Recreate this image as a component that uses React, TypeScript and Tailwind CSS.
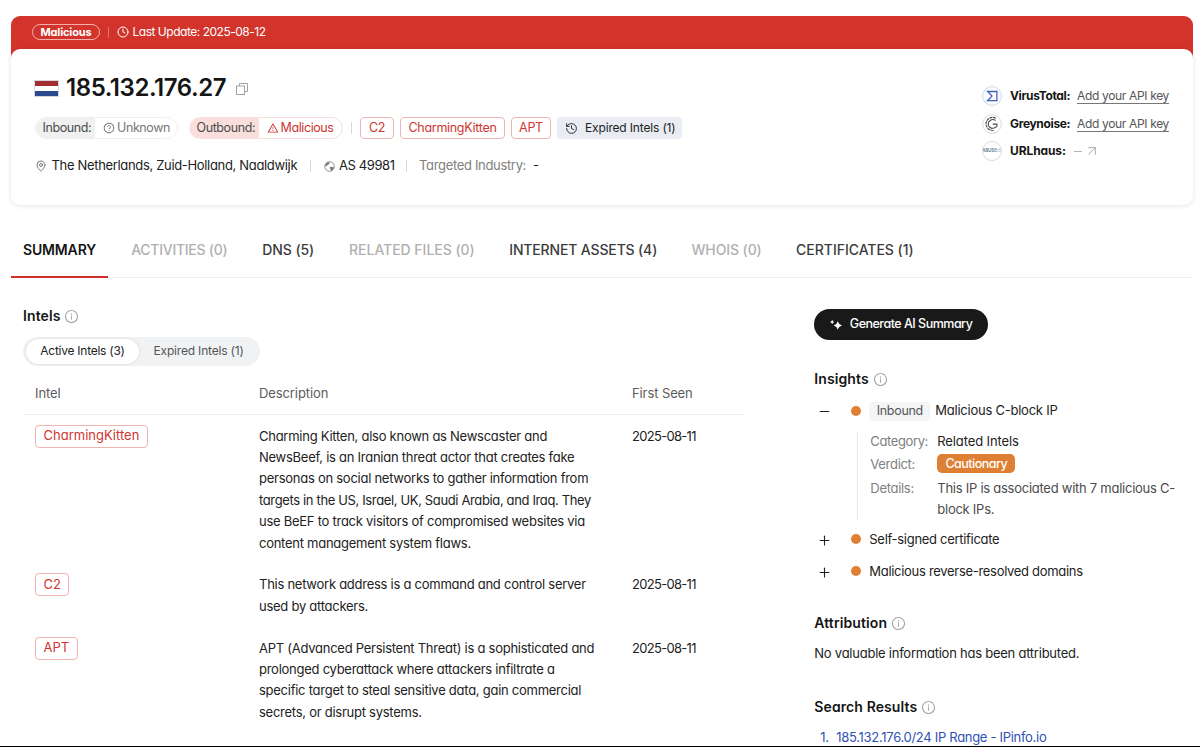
import type { ReactNode } from "react";
import { ArrowUpRight, Clock, History, MapPin, Minus, Plus } from "lucide-react";
import {
  AiOutlineInfoCircle,
  AiOutlineQuestionCircle,
  AiOutlineWarning,
} from "react-icons/ai";
import clsx from "clsx";

const tabs = [
  { label: "SUMMARY", active: true, className: "w-[73px] tracking-[-0.15px]" },
  { label: "ACTIVITIES (0)", disabled: true, className: "w-[96px] tracking-[-0.27px]" },
  { label: "DNS (5)", className: "w-[51.5px] tracking-[-0.1px]" },
  { label: "RELATED FILES (0)", disabled: true, className: "w-[125px] tracking-[-0.03px]" },
  { label: "INTERNET ASSETS (4)", className: "w-[147px] tracking-[-0.15px]" },
  { label: "WHOIS (0)", disabled: true, className: "w-[69.5px] tracking-[-0.1px]" },
  { label: "CERTIFICATES (1)", className: "w-[117px] tracking-[-0.03px]" },
];

const intels = [
  {
    name: "CharmingKitten",
    date: "2025-08-11",
    lines: [
      "Charming Kitten, also known as Newscaster and",
      "NewsBeef, is an Iranian threat actor that creates fake",
      "personas on social networks to gather information from",
      "targets in the US, Israel, UK, Saudi Arabia, and Iraq. They",
      "use BeEF to track visitors of compromised websites via",
      "content management system flaws.",
    ],
  },
  {
    name: "C2",
    date: "2025-08-11",
    lines: [
      "This network address is a command and control server",
      "used by attackers.",
    ],
  },
  {
    name: "APT",
    date: "2025-08-11",
    lines: [
      "APT (Advanced Persistent Threat) is a sophisticated and",
      "prolonged cyberattack where attackers infiltrate a",
      "specific target to steal sensitive data, gain commercial",
      "secrets, or disrupt systems.",
    ],
  },
];

function Tag({ children, className }: { children: ReactNode; className?: string }) {
  return (
    <span
      className={clsx(
        "inline-flex items-center rounded-[4px] border border-[#efb4b1] text-[#cf3430]",
        className
      )}
    >
      {children}
    </span>
  );
}

function Divider() {
  return <span className="block h-3 w-px bg-[#d9d9d9]" />;
}

function Heading({ children }: { children: ReactNode }) {
  return (
    <h2 className="flex h-5 items-center gap-1 pb-[2px] text-[14px] font-semibold tracking-[0.1px] text-[#151515]">
      {children}
      <AiOutlineInfoCircle className="mt-[2px] size-[15px] text-[#a5a5a5]" />
    </h2>
  );
}

function Dot() {
  return <span className="size-[10px] shrink-0 rounded-full bg-[#de7f33]" />;
}

function CopyIcon() {
  return (
    <svg viewBox="0 0 12 12" className="size-3" fill="none" stroke="#a3a3a3">
      <path d="M3.5 3V.5h8v8H9" />
      <rect x=".5" y="3" width="8" height="8.5" />
    </svg>
  );
}

function GlobeIcon() {
  return (
    <svg viewBox="0 0 12 12" className="size-[11px]">
      <circle cx="6" cy="6" r="5.2" fill="none" stroke="#777" strokeWidth=".9" />
      <path
        d="M2 3 4.6 1.2l1.6 1-.8 1.3-1.5.5-.6 1.4-1.9.3ZM6.8 6.4l2.5.1 1.7.8-2 2.9-1.3.6-.5-1.8-.9-1.2Z"
        fill="#777"
      />
    </svg>
  );
}

function SparkleIcon() {
  return (
    <svg viewBox="0 0 12 12" className="size-3" fill="#fff">
      <path d="M7.8 2.2Q8.6 5.4 12 6.4 8.6 7.4 7.8 10.8 7 7.4 3.7 6.4 7 5.4 7.8 2.2Z" />
      <path d="M2.2.8Q2.6 2.5 4.4 3 2.6 3.5 2.2 5.2 1.8 3.5 0 3 1.8 2.5 2.2.8Z" />
    </svg>
  );
}

function VirusTotalLogo() {
  return (
    <svg viewBox="0 0 20 20" className="size-5" fill="none">
      <circle cx="10" cy="10" r="9.4" fill="#fbfcff" stroke="#cfd7ee" />
      <path d="M5.6 5.5h9.3v9.2H5.6L10 10.1Z" stroke="#4660b8" strokeWidth="1.3" />
    </svg>
  );
}

function GreynoiseLogo() {
  return (
    <svg viewBox="0 0 20 20" className="size-5" fill="none">
      <circle cx="10" cy="10" r="9.4" fill="#fff" stroke="#d9d9d9" />
      <g stroke="#4a4a4a" strokeWidth="1.1">
        <path d="M13.8 4.2A6.6 6.6 0 0 0 4 9.6a6.8 6.8 0 0 0 7.4 6.8" strokeDasharray="3 .6" />
        <path d="M13.6 6.5A4.6 4.6 0 0 0 6.2 10a4.2 4.2 0 0 0 5.8 3.9l2.9-1.5v-2.3h-4.2" />
      </g>
    </svg>
  );
}

function UrlhausLogo() {
  return (
    <span className="flex size-5 items-center justify-center overflow-hidden rounded-full border border-[#d8dbdd] text-[4.5px] font-bold tracking-[-0.1px] text-[#6f8895]">
      ABUSE<span className="text-[#b9c6cd]">ch</span>
    </span>
  );
}

function ApiKeyLink() {
  return (
    <a className="w-[92px] border-b border-[#777] leading-[15px] tracking-[-0.34px] text-[#555]">
      Add your API key
    </a>
  );
}

function Header() {
  return (
    <header className="mr-[7px] ml-[11px]">
      <div className="flex h-[43px] items-start rounded-t-[9px] bg-[#d2332b] pt-2 pl-[21px] text-white">
        <span className="flex h-4 w-[68px] items-center justify-center rounded-full border border-[#f3b0ab] text-[11px] font-bold tracking-[-0.15px]">
          Malicious
        </span>
        <span className="mt-[3px] ml-2 h-[11px] w-px bg-[#e2766f]" />
        <Clock className="mt-[2px] ml-2 size-3" />
        <span className="ml-[3.5px] text-[12px] leading-4 tracking-[-0.48px]">
          Last Update: 2025-08-12
        </span>
      </div>

      <div className="relative -mt-[10px] flex h-[156px] justify-between rounded-[9px] bg-white pt-[23px] pr-6 pl-[23px] shadow-[0_1px_5px_rgba(0,0,0,0.11)]">
        <div>
          <div className="flex h-8 items-center">
            <span className="flex h-[17px] w-[25px] flex-col border border-[#d5d5dc]">
              <span className="flex-1 bg-[#a32e31]" />
              <span className="flex-1 bg-white" />
              <span className="flex-1 bg-[#2a4a90]" />
            </span>
            <h1 className="ml-[7px] w-[161px] text-[24px] font-semibold tracking-[-0.43px] whitespace-nowrap text-[#151515]">
              185.132.176.27
            </h1>
            <span className="mt-[2px] ml-[9px]">
              <CopyIcon />
            </span>
          </div>

          <div className="mt-[13px] flex h-[22px] items-center text-[12.5px] tracking-[-0.4px] whitespace-nowrap">
            <span className="ml-px flex h-[22px] w-[143px] overflow-hidden rounded-full border border-[#f0f0f0] leading-5">
              <span className="w-[59px] bg-[#f0f0f0] pl-[6.5px] text-[#4c4c4c]">Inbound:</span>
              <span className="flex items-center gap-[2px] pl-2 text-[#777]">
                <AiOutlineQuestionCircle className="size-3" />
                Unknown
              </span>
            </span>
            <span className="ml-[11px] flex h-[22px] w-[154px] overflow-hidden rounded-full border border-[#f9dedc] leading-5">
              <span className="w-[69px] bg-[#f9dedc] pl-[6.5px] text-[#4c4c4c]">Outbound:</span>
              <span className="flex items-center gap-[2px] pl-[7.5px] text-[#cf3430]">
                <AiOutlineWarning className="size-3" />
                Malicious
              </span>
            </span>
            <span className="mr-2 ml-[8px]">
              <Divider />
            </span>
            <div className="flex gap-[6px] tracking-[-0.3px]">
              <Tag className="h-[22px] w-[34px] justify-center">C2</Tag>
              <Tag className="h-[22px] w-[105px] justify-center">CharmingKitten</Tag>
              <Tag className="h-[22px] w-[40px] justify-center">APT</Tag>
              <span className="flex h-[22px] w-[125px] items-center rounded-[4px] bg-[#e9ecf2] pl-[8px] text-[12px] tracking-[-0.16px] text-[#222]">
                <History className="mr-[7px] size-[13px]" strokeWidth={1.7} />
                Expired Intels (1)
              </span>
            </div>
          </div>

          <div className="mt-[17px] flex h-5 items-center text-[13px] tracking-[-0.33px] whitespace-nowrap text-[#222]">
            <MapPin className="mr-[4.5px] ml-px size-3 text-[#777]" />
            <span className="w-[246.5px]">The Netherlands, Zuid-Holland, Naaldwijk</span>
            <span className="mr-[13px] ml-[12px]">
              <Divider />
            </span>
            <GlobeIcon />
            <span className="ml-1 w-[57px] tracking-[-0.4px]">AS 49981</span>
            <span className="mr-3 ml-[10px]">
              <Divider />
            </span>
            <span className="w-[107px] text-[#808080]">Targeted Industry:</span>
            <span className="ml-[7px]">-</span>
          </div>
        </div>

        <div className="mt-[14px] flex flex-col gap-[7.5px] text-[12px] whitespace-nowrap text-[#151515]">
          <div className="flex h-5 items-center">
            <VirusTotalLogo />
            <b className="ml-2 w-[67px] font-bold tracking-[-0.35px]">VirusTotal:</b>
            <ApiKeyLink />
          </div>
          <div className="flex h-5 items-center">
            <GreynoiseLogo />
            <b className="ml-2 w-[67px] font-bold tracking-[-0.35px]">Greynoise:</b>
            <ApiKeyLink />
          </div>
          <div className="flex h-5 items-center">
            <UrlhausLogo />
            <b className="ml-2 w-[64px] font-bold tracking-[-0.1px]">URLhaus:</b>
            <span className="h-px w-[8px] bg-[#b5b5b5]" />
            <ArrowUpRight className="ml-[2px] size-4 text-[#aaa]" strokeWidth={1.5} />
          </div>
        </div>
      </div>
    </header>
  );
}

function TabBar() {
  return (
    <nav className="mr-[7px] ml-[11.4px] flex h-[73px] gap-[12px] border-b border-[#f0f0f0] text-[14px] font-medium whitespace-nowrap">
      {tabs.map((tab) => (
        <button
          key={tab.label}
          className={clsx(
            "box-content flex h-[71px] items-center px-[11.6px]",
            tab.className,
            tab.active && "border-b-2 border-[#cf2f2a] font-semibold text-[#151515]",
            tab.disabled && "text-[#b0b0b0]",
            !tab.active && !tab.disabled && "text-[#3c3c3c]"
          )}
        >
          <span className="mt-[18px]">{tab.label}</span>
        </button>
      ))}
    </nav>
  );
}

function IntelsTable() {
  return (
    <section className="w-[721px]">
      <Heading>Intels</Heading>
      <div className="mt-[11px] flex h-[29px] w-[237px] items-center rounded-full bg-[#f1f2f4] px-[3px] pb-px text-[12px] tracking-[-0.25px] whitespace-nowrap">
        <span className="flex h-[25px] w-[113px] items-center justify-center rounded-full bg-white text-[#222] shadow-[0_0_3px_rgba(0,0,0,0.12)]">
          Active Intels (3)
        </span>
        <span className="flex-1 pl-[14.5px] tracking-[-0.18px] text-[#555]">
          Expired Intels (1)
        </span>
      </div>

      <div className="mt-[6px] flex h-[43px] items-center border-b border-[#efefef] pt-px pl-3 text-[13px] tracking-[-0.1px] text-[#5c5c5c]">
        <span className="w-[224px]">Intel</span>
        <span className="w-[373px]">Description</span>
        <span>First Seen</span>
      </div>
      {intels.map((intel, i) => (
        <div
          key={intel.name}
          className={clsx(
            "flex pb-[10.2px] pl-3 text-[13px] leading-[21.4px] tracking-[-0.26px] whitespace-nowrap text-[#222]",
            i === 0 ? "pt-[10.6px]" : "pt-[10.2px]"
          )}
        >
          <div className="-mt-px w-[224px]">
            <Tag className="h-[23px] px-[7.5px]">
              <span className="tracking-normal">{intel.name}</span>
            </Tag>
          </div>
          <div className="w-[373px]">
            {intel.lines.map((line) => (
              <p key={line} className={clsx(line.length > 56 && "tracking-[-0.36px]")}>
                {line}
              </p>
            ))}
          </div>
          <span className="tracking-[-0.7px]">{intel.date}</span>
        </div>
      ))}
    </section>
  );
}

function Sidebar() {
  return (
    <aside className="w-[378.7px] text-[13px] tracking-[-0.3px] whitespace-nowrap text-[#222]">
      <button className="mt-[3px] flex h-[31px] w-[174px] items-center rounded-full bg-[#191919] pl-4 text-[12.5px] font-medium tracking-[-0.5px] text-white">
        <span className="mr-[7.5px]">
          <SparkleIcon />
        </span>
        Generate AI Summary
      </button>

      <div className="mt-[29px]">
        <Heading>Insights</Heading>
      </div>
      <div className="mt-3 flex h-5 items-center pl-[3px]">
        <Minus className="mr-[19px] size-[15px]" strokeWidth={1.8} />
        <Dot />
        <span className="ml-[8px] flex h-[19px] w-[61px] items-center justify-center rounded-[4px] bg-[#f4f5f7] text-[12.5px] text-[#555]">
          Inbound
        </span>
        <span className="ml-[5px] tracking-[-0.24px]">Malicious C-block IP</span>
      </div>
      <div className="mt-[10px] ml-[42.5px] h-[90px] border-l border-[#e9e9e9] pl-[12.5px] leading-[21.4px] text-[#808080]">
        <div className="flex h-[23px]">
          <span className="w-[67px] tracking-[-0.38px]">Category:</span>
          <span className="tracking-[-0.12px] text-[#222]">Related Intels</span>
        </div>
        <div className="flex h-[24px]">
          <span className="w-[67px]">Verdict:</span>
          <span className="flex h-[19px] w-[78px] items-center justify-center rounded-[5px] bg-[#de7f33] text-[12.5px] font-medium tracking-[-0.5px] text-white">
            Cautionary
          </span>
        </div>
        <div className="flex">
          <span className="w-[67px]">Details:</span>
          <span className="tracking-[-0.26px] text-[#4c4c4c]">
            This IP is associated with 7 malicious C-
            <br />
            block IPs.
          </span>
        </div>
      </div>
      <div className="mt-[8px] flex h-5 items-center pl-[3px]">
        <Plus className="mt-[2px] mr-[19px] size-[15px]" strokeWidth={1.8} />
        <Dot />
        <span className="mt-px ml-[8px]">Self-signed certificate</span>
      </div>
      <div className="mt-[12px] flex h-5 items-center pl-[3px]">
        <Plus className="mt-[2px] mr-[19px] size-[15px]" strokeWidth={1.8} />
        <Dot />
        <span className="mt-px ml-[8px]">Malicious reverse-resolved domains</span>
      </div>

      <div className="mt-[32px]">
        <Heading>Attribution</Heading>
      </div>
      <p className="mt-[10px] leading-5 tracking-[-0.24px]">
        No valuable information has been attributed.
      </p>

      <div className="mt-[34px]">
        <Heading>Search Results</Heading>
      </div>
      <div className="mt-[10px] flex pl-[6px] leading-5 text-[#2f51b5]">
        <span className="w-[16px]">1.</span>
        <a>185.132.176.0/24 IP Range - IPinfo.io</a>
      </div>
    </aside>
  );
}

export default function App() {
  return (
    <div className="h-[747px] overflow-hidden border-b border-black bg-white pt-4 font-['Inter',sans-serif] [font-feature-settings:'cv11']">
      <Header />
      <TabBar />
      <main className="mt-[28px] flex justify-between pr-[7px] pl-[23px]">
        <IntelsTable />
        <Sidebar />
      </main>
    </div>
  );
}
